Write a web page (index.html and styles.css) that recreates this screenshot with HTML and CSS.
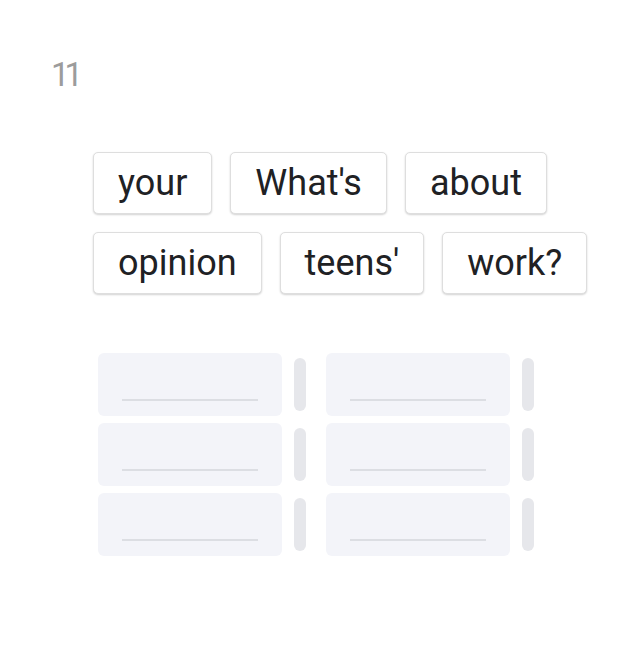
FILE: index.html
```html
<!DOCTYPE html>
<html>
<head>
<meta charset="utf-8">
<link rel="stylesheet" href="styles.css">
</head>
<body>
<div class="page">
  <div class="qnum">11</div>
  <div class="chips">
    <div class="chip">your</div>
    <div class="chip">What's</div>
    <div class="chip">about</div>
    <div class="chip">opinion</div>
    <div class="chip">teens'</div>
    <div class="chip">work?</div>
  </div>
  <div class="slots">
    <div class="col">
      <div class="slotrow"><div class="slot"><span class="line"></span></div><div class="handle"></div></div>
      <div class="slotrow"><div class="slot"><span class="line"></span></div><div class="handle"></div></div>
      <div class="slotrow"><div class="slot"><span class="line"></span></div><div class="handle"></div></div>
    </div>
    <div class="col">
      <div class="slotrow"><div class="slot"><span class="line"></span></div><div class="handle"></div></div>
      <div class="slotrow"><div class="slot"><span class="line"></span></div><div class="handle"></div></div>
      <div class="slotrow"><div class="slot"><span class="line"></span></div><div class="handle"></div></div>
    </div>
  </div>
</div>
</body>
</html>
```
FILE: styles.css
```css
html, body {
  margin: 0;
  padding: 0;
  background: #ffffff;
}
body {
  font-family: Roboto, "Noto Sans", sans-serif;
  width: 637px;
  height: 659px;
}
.page {
  padding: 56px 0 0 0;
}
.qnum {
  margin-left: 51px;
  font-size: 33px;
  line-height: 38px;
  letter-spacing: -5px;
  color: #9c9c9c;
}
.chips {
  margin: 58px 0 0 93px;
  width: 510px;
  display: flex;
  flex-wrap: wrap;
  gap: 18px 18px;
}
.chip {
  height: 60px;
  padding: 0 24px;
  border: 1px solid #dedede;
  border-radius: 5px;
  box-shadow: 0 1px 2px rgba(0,0,0,0.18);
  background: #fff;
  font-size: 36px;
  line-height: 60px;
  color: #202124;
  box-sizing: content-box;
}
.slots {
  margin: 59px 0 0 98px;
  display: flex;
  gap: 20px;
}
.col {
  display: flex;
  flex-direction: column;
  gap: 7px;
}
.slotrow {
  display: flex;
  align-items: center;
  gap: 12px;
}
.slot {
  width: 184px;
  height: 63px;
  background: #f3f4f9;
  border-radius: 6px;
  display: flex;
  justify-content: center;
  align-items: flex-end;
  padding-bottom: 15px;
  box-sizing: border-box;
}
.line {
  display: block;
  width: 136px;
  height: 2px;
  background: #dcdee3;
}
.handle {
  width: 12px;
  height: 53px;
  border-radius: 6px;
  background: #e6e7eb;
}
```
